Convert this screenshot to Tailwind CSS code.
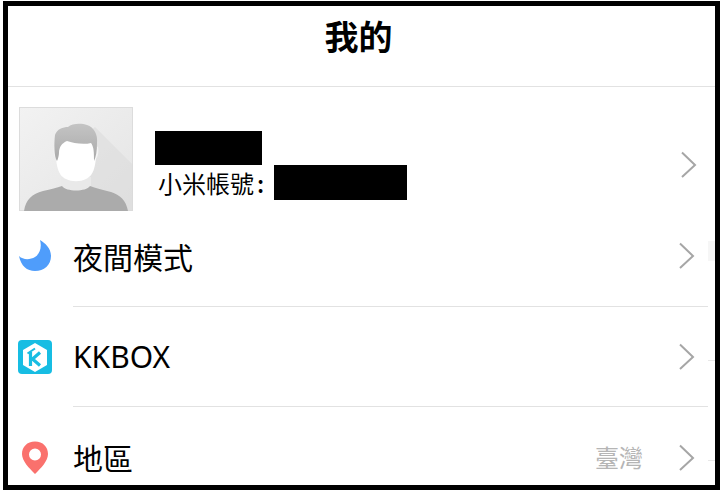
<!DOCTYPE html>
<html lang="zh-Hant">
<head>
<meta charset="utf-8">
<script src="https://cdn.jsdelivr.net/npm/@tailwindcss/browser@4"></script>
</head>
<body class="bg-white w-[720px] h-[492px] overflow-hidden font-['Noto_Sans_CJK_TC','Noto_Sans',sans-serif]">
<div class="pt-[1px] pl-[3px]">
  <div class="relative w-[717px] h-[489px] border-[5px] border-black bg-white overflow-hidden text-black">
    <!-- header -->
    <div class="h-[81px] border-b border-[#e2e2e2] flex items-center justify-center pr-[6px] pb-[20px]">
      <h1 class="text-[34px] leading-none font-bold">我的</h1>
    </div>
    <!-- profile -->
    <div class="h-[120px] flex items-start pl-[11px] pr-[17px]">
      <svg class="mt-[20px] shrink-0" width="114" height="104" viewBox="0 0 114 104">
        <defs>
          <linearGradient id="bg" x1="0" y1="0" x2="1" y2="1"><stop offset="0" stop-color="#f2f2f2"/><stop offset="1" stop-color="#e4e4e4"/></linearGradient>
          <linearGradient id="hair" x1="0" y1="0" x2="0" y2="1"><stop offset="0" stop-color="#c4c4c4"/><stop offset="1" stop-color="#a9a9a9"/></linearGradient>
        </defs>
        <rect width="114" height="104" fill="url(#bg)"/>
        <rect x="0.5" y="0.5" width="113" height="103" fill="none" stroke="#dcdcdc"/>
        <path d="M76 20L114 58V104H60L50 40Z" fill="#dadada" opacity=".55"/>
        <path d="M42 70h30v22H42z" fill="#e9e9e9"/>
        <path d="M5 104C7 92 13 87 24 84C32 82 38 81 43 79C47 85 67 85 71 79C76 81 84 83 92 85C101 88 107 93 109 104Z" fill="#ababab"/>
        <path d="M37 32C36 56 38 68 47 72C53 75 61 75 67 72C76 68 78 56 77 32C66 28 48 28 37 32Z" fill="#fff"/>
        <path d="M37 52C35 50 34 44 35 40C36 38 37 42 37 44Z M77 52C79 50 80 44 79 40C78 38 77 42 77 44Z" fill="#f3f3f3"/>
        <path d="M38 54C35 50 35 36 36 28C38 22 44 20 49 20C53 16 63 16 68 18C75 20 79 28 78 36C78 44 77 50 75 54C75 46 75 40 72 36C64 38 54 36 48 34C43 36 40 40 40 46C40 48 39 52 38 54Z" fill="url(#hair)"/>
      </svg>
      <div class="ml-[22px] mt-[44px] flex-1 min-w-0">
        <div class="w-[107px] h-[34px] bg-black"></div>
        <div class="flex items-center h-[35px]">
          <span class="ml-[3px] w-[116px] text-[24px] leading-none whitespace-nowrap">小米帳號<span class="ml-[3px] font-medium">:</span></span>
          <span class="w-[133px] h-[35px] bg-black"></span>
        </div>
      </div>
      <svg class="mt-[64px] shrink-0" width="18" height="28" viewBox="0 0 18 28" fill="none" stroke="#a6a6a6" stroke-width="2"><path d="M2 1.5L15 14L2 26"/></svg>
    </div>
    <!-- rows -->
    <div class="flex h-[100px] items-center pl-[10px] pr-[19px]">
      <svg class="shrink-0 mb-[2px]" width="34" height="34" viewBox="0 0 34 34"><path d="M22 1C27 4 33 9 33 17C33 26 26 32 17 32C9 32 3 27 1 17C5 21 12 21 17 18C22 15 24 8 22 1Z" fill="#4f9dfb"/></svg>
      <span class="ml-[21px] flex-1 text-[30px] leading-none mb-[2px]">夜間模式</span>
      <svg class="shrink-0 mb-[2px]" width="18" height="28" viewBox="0 0 18 28" fill="none" stroke="#a6a6a6" stroke-width="2"><path d="M2 1.5L15 14L2 26"/></svg>
    </div>
    <div class="ml-[65px] mr-[7px] h-px bg-[#e2e2e2] -mt-[1px]"></div>
    <div class="flex h-[100px] items-center pl-[10px] pr-[19px]">
      <svg class="shrink-0" width="34" height="34" viewBox="0 0 34 34">
        <rect width="34" height="34" rx="4" fill="#17bde3"/>
        <path d="M17 3L29 10V25L17 32L5 25V10Z" fill="#fff"/>
        <path d="M9.5 13.5L17 8.5" fill="none" stroke="#17bde3" stroke-width="2"/>
        <path d="M12.5 12V26M22 12.5L14.5 19L22 25.5" fill="none" stroke="#17bde3" stroke-width="3.2"/>
      </svg>
      <span class="ml-[21px] flex-1 text-[30px] leading-none mb-[1px] font-['Noto_Sans',sans-serif]">KKBOX</span>
      <svg class="shrink-0" width="18" height="28" viewBox="0 0 18 28" fill="none" stroke="#a6a6a6" stroke-width="2"><path d="M2 1.5L15 14L2 26"/></svg>
    </div>
    <div class="ml-[65px] mr-[7px] h-px bg-[#e2e2e2] -mt-[1px]"></div>
    <div class="flex h-[100px] items-center pl-[10px] pr-[19px]">
      <svg class="shrink-0 mt-[2px]" width="34" height="34" viewBox="0 0 34 34"><path fill-rule="evenodd" d="M17 0.5C25 0.5 30 6 30 13C30 20 23 27 17 33C11 27 4 20 4 13C4 6 9 0.5 17 0.5ZM17 7.5A6 6 0 1 0 17 19.5A6 6 0 1 0 17 7.5Z" fill="#fa716d"/></svg>
      <span class="ml-[21px] flex-1 text-[30px] leading-none">地區</span>
      <span class="mr-[35px] text-[24px] leading-none text-[#b5b5b5]">臺灣</span>
      <svg class="shrink-0 mt-[2px]" width="18" height="28" viewBox="0 0 18 28" fill="none" stroke="#a6a6a6" stroke-width="2"><path d="M2 1.5L15 14L2 26"/></svg>
    </div>
    <!-- slim marks at the right edge -->
    <div class="absolute left-[700px] top-[235px] w-[7px] h-[20px] bg-[#f6f6f6]"></div>
    <div class="absolute left-[700px] top-[354px] w-[7px] h-px bg-[#e8e8e8]"></div>
    <div class="absolute left-[700px] top-[454px] w-[7px] h-px bg-[#e8e8e8]"></div>
  </div>
</div>
</body>
</html>
